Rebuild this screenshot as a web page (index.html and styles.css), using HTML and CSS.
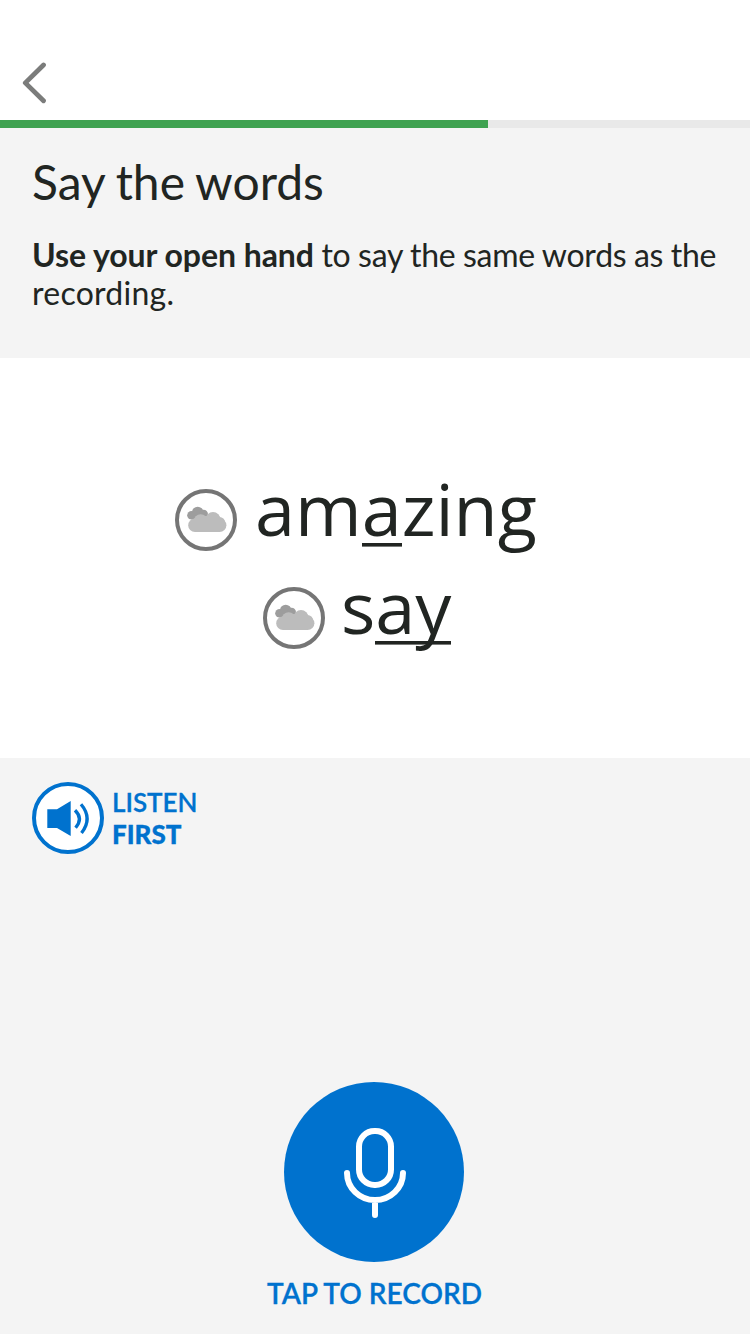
FILE: index.html
```html
<!DOCTYPE html>
<html lang="en">
<head>
<meta charset="utf-8">
<title>Say the words</title>
<link rel="stylesheet" href="styles.css">
</head>
<body>
<header class="topbar">
  <button class="back" aria-label="Back">
    <svg width="26" height="42" viewBox="0 0 26 42"><path d="M21.500 3L3.300 20.900L21.500 38.800" fill="none" stroke="#7b7c7b" stroke-width="4.800" stroke-linecap="round" stroke-linejoin="round"/></svg>
  </button>
</header>
<div class="progress"><div class="progress-fill"></div></div>
<section class="intro">
  <h1 class="title">Say the words</h1>
  <p class="instructions"><strong>Use your open hand</strong> to say the same words as the <span class="last-word">recording.</span></p>
</section>
<main class="words">
  <div class="word word-first">
    <svg class="cloud" width="62" height="62" viewBox="0 0 62 62"><circle cx="31" cy="31" r="29" fill="#fff" stroke="#757575" stroke-width="4"/><g fill="#9d9d9d"><circle cx="16.500" cy="26.200" r="4.300"/><circle cx="22.700" cy="23.400" r="5.700"/><circle cx="28.500" cy="25.200" r="4.500"/><path d="M16.500 24H28v6.500H16.500z"/></g><g fill="#bcbcbc"><circle cx="25.700" cy="32.300" r="7"/><circle cx="38" cy="30.500" r="7.500"/><circle cx="44.500" cy="33.500" r="5.500"/><rect x="13.200" y="29.500" width="38.200" height="13.500" rx="6.750"/><path d="M26 27h12v10H26z"/></g></svg>
    <span class="text">am<span class="mark">a</span>zing</span>
  </div>
  <div class="word word-second">
    <svg class="cloud" width="62" height="62" viewBox="0 0 62 62"><circle cx="31" cy="31" r="29" fill="#fff" stroke="#757575" stroke-width="4"/><g fill="#9d9d9d"><circle cx="16.500" cy="26.200" r="4.300"/><circle cx="22.700" cy="23.400" r="5.700"/><circle cx="28.500" cy="25.200" r="4.500"/><path d="M16.500 24H28v6.500H16.500z"/></g><g fill="#bcbcbc"><circle cx="25.700" cy="32.300" r="7"/><circle cx="38" cy="30.500" r="7.500"/><circle cx="44.500" cy="33.500" r="5.500"/><rect x="13.200" y="29.500" width="38.200" height="13.500" rx="6.750"/><path d="M26 27h12v10H26z"/></g></svg>
    <span class="text">s<span class="mark">ay</span></span>
  </div>
</main>
<section class="controls">
  <button class="listen">
    <svg width="72" height="72" viewBox="0 0 72 72"><circle cx="36" cy="36" r="34" fill="#fff" stroke="#0072ce" stroke-width="4"/><path d="M15.300 27.300H25L38.700 19V54L25 46H15.300z" fill="#0072ce"/><path d="M43 28.300Q51.500 36.500 43.600 45.700M49 22.300Q61 36.500 49.500 51" fill="none" stroke="#0072ce" stroke-width="3.300"/></svg>
    <span class="listen-label">LISTEN<br><b>FIRST</b></span>
  </button>
  <button class="record">
    <svg width="180" height="180" viewBox="0 0 180 180"><circle cx="90" cy="90" r="90" fill="#0072ce"/><g fill="none" stroke="#fff" stroke-width="6" stroke-linecap="round"><rect x="75" y="49" width="32" height="54" rx="15.500"/><path d="M63 91a28 27 0 0 0 56 0M91 119V133"/></g></svg>
    <span class="record-label">TAP TO RECORD</span>
  </button>
</section>
</body>
</html>
```
FILE: styles.css
```css
* { box-sizing: border-box; }
body { margin: 0; width: 750px; height: 1334px; display: flex; flex-direction: column; background: #fff; color: #212522; font-family: Lato, sans-serif; overflow: hidden; }
button { border: 0; padding: 0; background: none; font: inherit; color: #0072ce; }
svg { display: block; flex: none; }
.topbar { height: 120px; padding: 62px 0 0 22px; }
.progress { height: 8px; background: #e9e9e9; }
.progress-fill { width: 65%; height: 8px; background: #3fa251; }
.intro { height: 230px; padding: 25px 32px 0; background: #f4f4f4; }
.title { margin: 0; font-size: 48px; line-height: 58px; font-weight: 400; word-spacing: -1.2px; }
.instructions { margin: 25px -10px 0 0; font-size: 32px; line-height: 38px; letter-spacing: -0.25px; word-spacing: -0.4px; }
.instructions strong { letter-spacing: -0.06px; word-spacing: 0; }
.last-word { letter-spacing: 0.25px; }
.words { height: 400px; padding-top: 104px; }
.word { height: 98px; display: flex; }
.word-first { padding-left: 175px; }
.word-second { padding-left: 263px; }
.cloud { margin-top: 27px; }
.text { margin: -3px 0 0 18px; font-family: "Open Sans", sans-serif; font-size: 72px; line-height: 98px; }
.word-second .text { margin-left: 16px; }
.mark { display: inline-block; height: 87px; border-bottom: 3px solid #212522; box-shadow: 0 1px 0 rgba(33, 37, 34, 0.6); }
.controls { height: 576px; padding-top: 24px; background: #f4f4f4; display: flex; flex-direction: column; }
.listen { display: flex; gap: 8px; margin-left: 32px; align-self: flex-start; text-align: left; }
.listen-label { padding-top: 4px; font-size: 26px; line-height: 32px; font-weight: 600; -webkit-text-stroke: 0.3px #0072ce; }
.listen-label b { font-weight: 900; }
.record { margin: 228px 0 0 284px; width: 180px; display: flex; flex-direction: column; align-items: center; }
.record-label { margin: 13px 0 0 1px; font-size: 28px; line-height: 36px; font-weight: 600; white-space: nowrap; -webkit-text-stroke: 0.3px #0072ce; }
```
